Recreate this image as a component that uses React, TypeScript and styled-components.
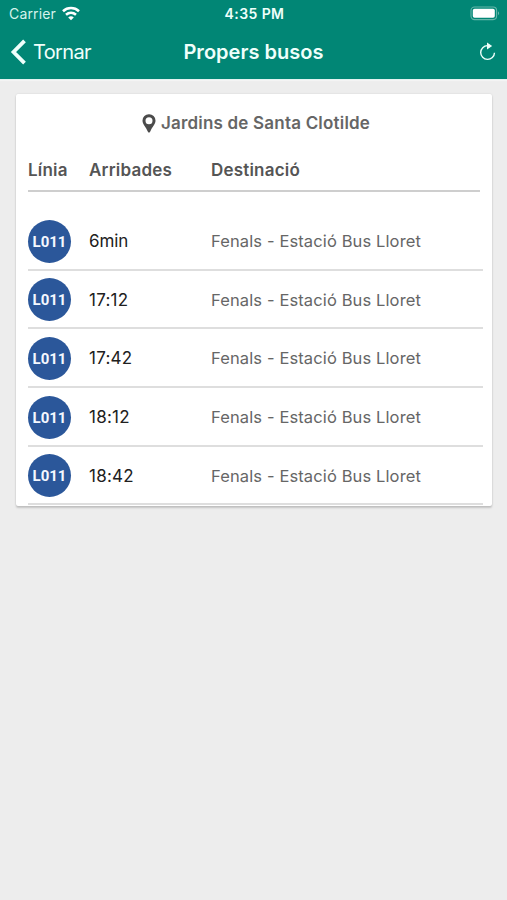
import React from "react";
import styled, { createGlobalStyle } from "styled-components";

const GlobalStyle = createGlobalStyle`
  * { box-sizing: border-box; }
  body { margin: 0; background: #ededed; font-family: Inter, "Liberation Sans", sans-serif; }
`;

const Screen = styled.main`
  min-height: 900px;
  background: #ededed;
`;

const Header = styled.header`
  height: 79px;
  background: #018675;
  color: #effffb;
  box-shadow: 0 1px 0 #e2f3f1, 0 2px 1px #f4f4f4;
`;

const StatusBar = styled.div`
  display: grid;
  grid-template-columns: 1fr auto 1fr;
  align-items: center;
  height: 27px;
  padding: 0 6px 0 9px;
`;

const Carrier = styled.div`
  display: flex;
  align-items: center;
  gap: 6px;
  font-size: 14px;
  line-height: 27px;
  letter-spacing: 0.15px;
  color: #d5f3ec;
`;

const Clock = styled.div`
  margin-left: -1px;
  font-size: 14px;
  font-weight: 600;
  letter-spacing: 0.4px;
`;

const BatteryIcon = styled.svg`
  display: block;
  justify-self: end;
`;

const NavBar = styled.nav`
  display: grid;
  grid-template-columns: 1fr auto 1fr;
  align-items: center;
  height: 50px;
  padding: 0 11px;
`;

const BackButton = styled.button`
  display: flex;
  align-items: center;
  gap: 7px;
  margin-left: -1px;
  padding: 0;
  border: 0;
  background: none;
  color: inherit;
  font: 400 20px/24px Inter, sans-serif;
  letter-spacing: -0.65px;
`;

const NavTitle = styled.h1`
  margin: 0;
  font-size: 20px;
  font-weight: 600;
  letter-spacing: 0.03px;
`;

const RefreshButton = styled.button`
  justify-self: end;
  display: flex;
  padding: 0 0 2px;
  border: 0;
  background: none;
  color: inherit;
`;

const Card = styled.section`
  width: 476px;
  height: 411.5px;
  margin: 15px 0 0 16px;
  padding: 0 9px 0 12px;
  background: #fff;
  border-radius: 2px;
  box-shadow: 0 2px 2px rgba(0, 0, 0, 0.17), 0 0 2px rgba(0, 0, 0, 0.12);
`;

const StopName = styled.h2`
  display: flex;
  align-items: center;
  justify-content: center;
  gap: 5px;
  height: 58px;
  margin: 0;
  padding-left: 1px;
  color: #666;
  font-size: 17px;
  font-weight: 600;
  letter-spacing: 0.2px;
`;

const Columns = styled.div`
  display: grid;
  grid-template-columns: 61px 122px 1fr;
  align-items: center;
`;

const TableHead = styled(Columns)`
  width: 452px;
  height: 40px;
  padding-bottom: 3px;
  border-bottom: 2px solid #cecece;
  color: #555;
  font-size: 17px;
  font-weight: 600;
  letter-spacing: 0.2px;
`;

const Rows = styled.div`
  padding-top: 20.2px;
`;

const Row = styled(Columns)`
  height: 58.6px;
  padding-top: 1.5px;
  border-bottom: 2px solid #dedede;
`;

const LineBadge = styled.span`
  display: flex;
  align-items: center;
  justify-content: center;
  width: 43px;
  height: 43px;
  padding-top: 1px;
  border-radius: 50%;
  background: #2b579a;
  color: #f4f8ff;
  font: 700 15px/20px Roboto, sans-serif;
`;

const Arrival = styled.span<{ $clock: boolean }>`
  color: #202020;
  font-size: 17px;
  letter-spacing: ${({ $clock }) => ($clock ? "0.25px" : "-0.1px")};
`;

const Destination = styled.span`
  color: #666;
  font-size: 16.5px;
  letter-spacing: 0.12px;
`;

const arrivals = ["6min", "17:12", "17:42", "18:12", "18:42"];

export default function App() {
  return (
    <Screen>
      <GlobalStyle />
      <Header>
        <StatusBar>
          <Carrier>
            <span>Carrier</span>
            <svg width="18" height="16" viewBox="0 0 18 14" fill="none" stroke="#fff" strokeWidth="2.6">
              <path d="M1 4.2C5.5 0 12.5 0 17 4.2" />
              <path d="M4 7.8C7 5.2 11 5.2 14 7.8" />
              <path d="M6.2 10.4C8 8.8 10 8.8 11.8 10.4L9 13.3Z" fill="#fff" stroke="none" />
            </svg>
          </Carrier>
          <Clock>4:35 PM</Clock>
          <BatteryIcon width="31" height="15" viewBox="0 0 31 15">
            <rect x="1" y="1" width="25.6" height="12.6" rx="3.5" fill="none" stroke="#66b6aa" strokeWidth="1.1" />
            <rect x="2.8" y="2.8" width="22" height="9" rx="1.8" fill="#fff" />
            <path d="M28 5.3Q30.3 7.3 28 9.3Z" fill="#66b6aa" />
          </BatteryIcon>
        </StatusBar>
        <NavBar>
          <BackButton>
            <svg width="16" height="26" viewBox="0 0 16 26" fill="none" stroke="currentColor" strokeWidth="3.8">
              <path d="M14.5 1.8L3.5 13L14.5 24.2" />
            </svg>
            Tornar
          </BackButton>
          <NavTitle>Propers busos</NavTitle>
          <RefreshButton aria-label="Refresh">
            <svg width="17" height="19" viewBox="0 0 17 19">
              <path d="M8.5 3.6A6.9 6.9 0 1 0 15.5 10.8" fill="none" stroke="currentColor" strokeWidth="1.4" />
              <path d="M8 0.5L13.2 4.1L8 7.4Z" fill="currentColor" />
            </svg>
          </RefreshButton>
        </NavBar>
      </Header>
      <Card>
        <StopName>
          <svg width="14" height="19" viewBox="0 0 14 19">
            <path fill="#4b4b4b" fillRule="evenodd" d="M7 .3A6.3 6.3 0 0 0 .5 6.7C.5 10.5 4 12.7 5.6 17.3Q7 20 8.4 17.3C10 12.7 13.5 10.5 13.5 6.7A6.3 6.3 0 0 0 7 .3ZM7 3.2A3.5 3.5 0 1 1 7 10.2A3.5 3.5 0 1 1 7 3.2Z" />
          </svg>
          Jardins de Santa Clotilde
        </StopName>
        <TableHead>
          <span>Línia</span>
          <span>Arribades</span>
          <span>Destinació</span>
        </TableHead>
        <Rows>
          {arrivals.map((time) => (
            <Row key={time}>
              <LineBadge>L011</LineBadge>
              <Arrival $clock={time.includes(":")}>{time}</Arrival>
              <Destination>Fenals - Estació Bus Lloret</Destination>
            </Row>
          ))}
        </Rows>
      </Card>
    </Screen>
  );
}
